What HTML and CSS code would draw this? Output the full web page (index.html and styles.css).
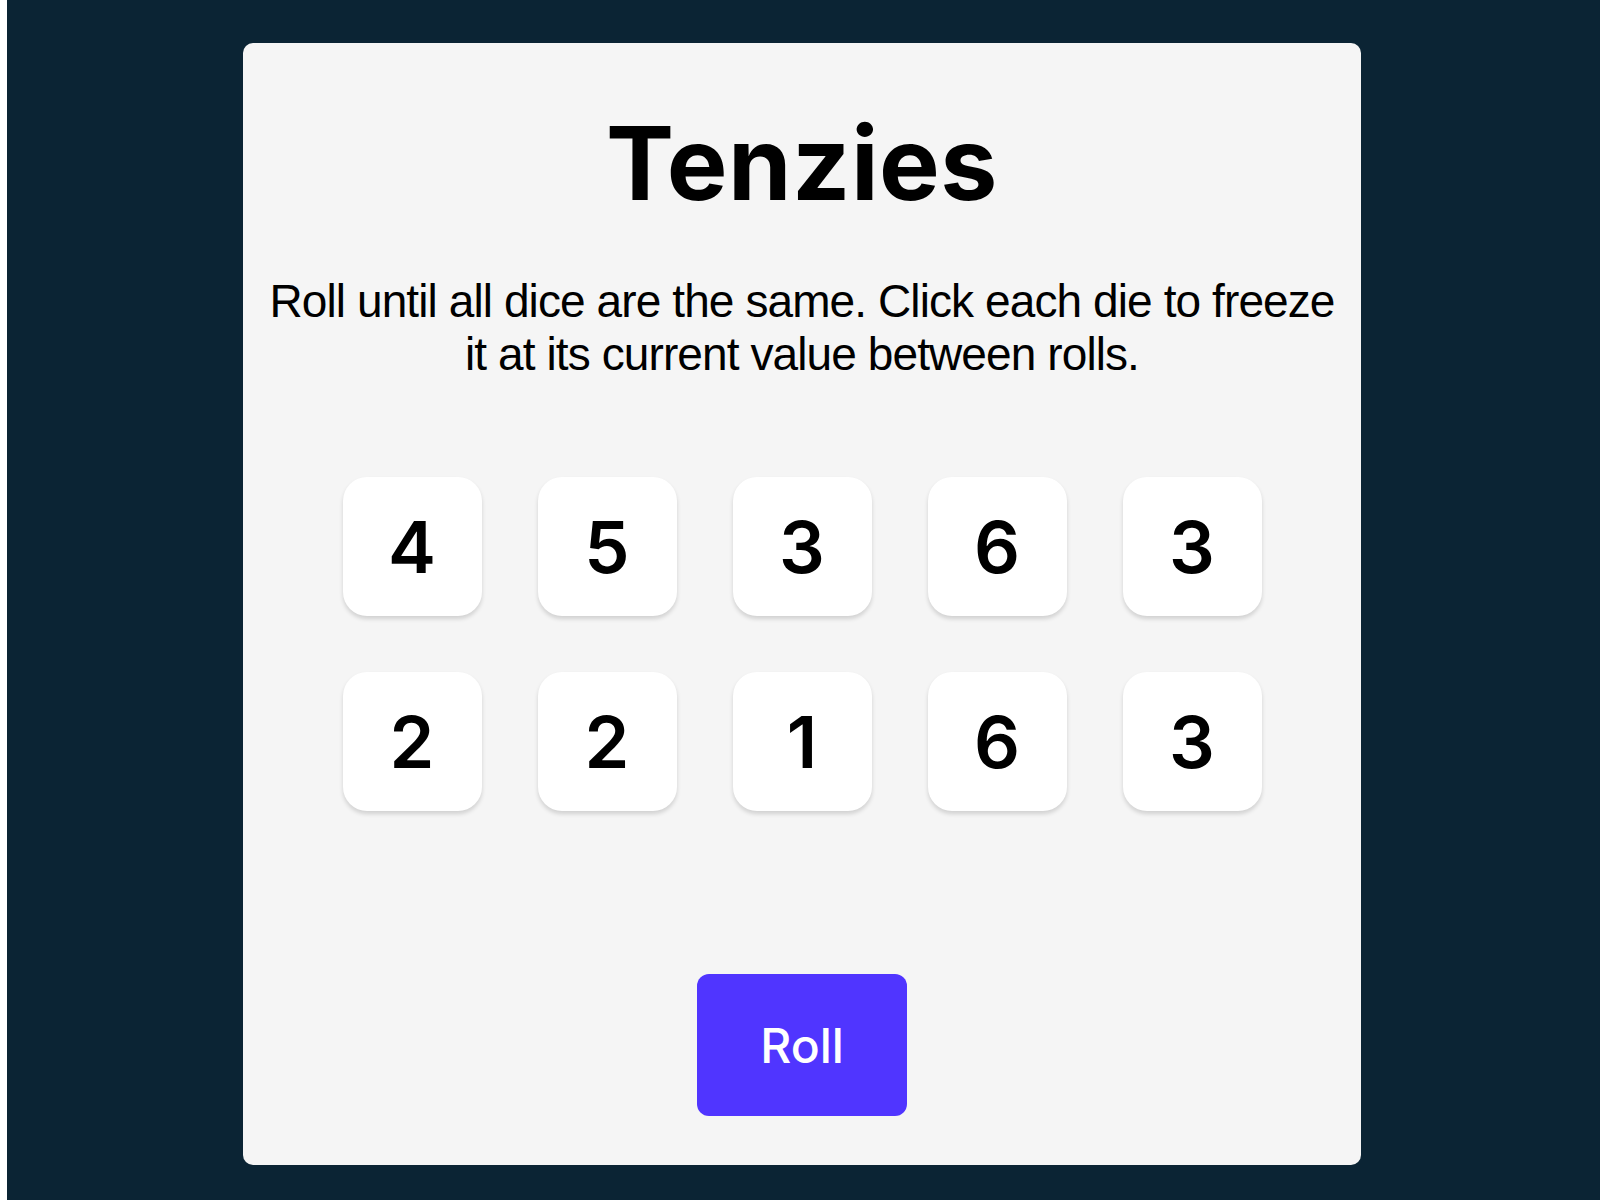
FILE: index.html
```html
<!DOCTYPE html>
<html lang="en">
<head>
    <meta charset="UTF-8">
    <meta name="viewport" content="width=device-width, initial-scale=1.0">
    <title>Tenzies</title>
    <link rel="stylesheet" href="styles.css">
</head>
<body>
    <div class="page">
        <main class="board">
            <h1 class="title">Tenzies</h1>
            <p class="instructions">Roll until all dice are the same. Click each die to freeze it at its current value between rolls.</p>

            <!-- Dice -->
            <div class="dice">
                <button class="die">4</button>
                <button class="die">5</button>
                <button class="die">3</button>
                <button class="die">6</button>
                <button class="die">3</button>
                <button class="die">2</button>
                <button class="die">2</button>
                <button class="die">1</button>
                <button class="die">6</button>
                <button class="die">3</button>
            </div>

            <button class="roll-btn">Roll</button>
        </main>
    </div>
</body>
</html>
```

FILE: styles.css
```css
/* General Styling */
body, html {
    margin: 0;
    padding: 0;
    background: #fff;
}

.page {
    margin-left: 7px;
    min-height: 100vh;
    background: #0B2434;
    padding: 43px 3px 35px 0;
    box-sizing: border-box;
    display: flex;
    justify-content: center;
}

/* Card */
.board {
    width: 1118px;
    height: 1122px;
    box-sizing: border-box;
    background: #F5F5F5;
    border-radius: 10px;
    padding: 69px 10px 0;
    display: flex;
    flex-direction: column;
    align-items: center;
}

.title {
    margin: 0;
    font-family: Inter, "Noto Sans", sans-serif;
    font-weight: 700;
    font-size: 102px;
    line-height: 1;
    letter-spacing: 0.5px;
    color: #000;
}

.instructions {
    margin: 61px 0 0;
    font-family: "Liberation Sans", Arial, sans-serif;
    font-size: 46px;
    line-height: 53px;
    letter-spacing: -0.9px;
    text-align: center;
    color: #000;
}

/* Dice grid */
.dice {
    margin-top: 96px;
    display: grid;
    grid-template-columns: repeat(5, 139px);
    grid-auto-rows: 139px;
    column-gap: 56px;
    row-gap: 56px;
}

.die {
    border: none;
    border-radius: 24px;
    background: #fff;
    box-shadow: 0 3px 4px rgba(0, 0, 0, 0.15);
    font-family: Inter, "Noto Sans", sans-serif;
    font-weight: 600;
    font-size: 72px;
    color: #000;
    padding: 0;
    cursor: pointer;
}

.roll-btn {
    margin-top: 163px;
    width: 210px;
    height: 142px;
    border: none;
    border-radius: 12px;
    background: #5035FF;
    color: #fff;
    font-family: Inter, "Noto Sans", sans-serif;
    font-weight: 500;
    font-size: 48px;
    cursor: pointer;
}
```
